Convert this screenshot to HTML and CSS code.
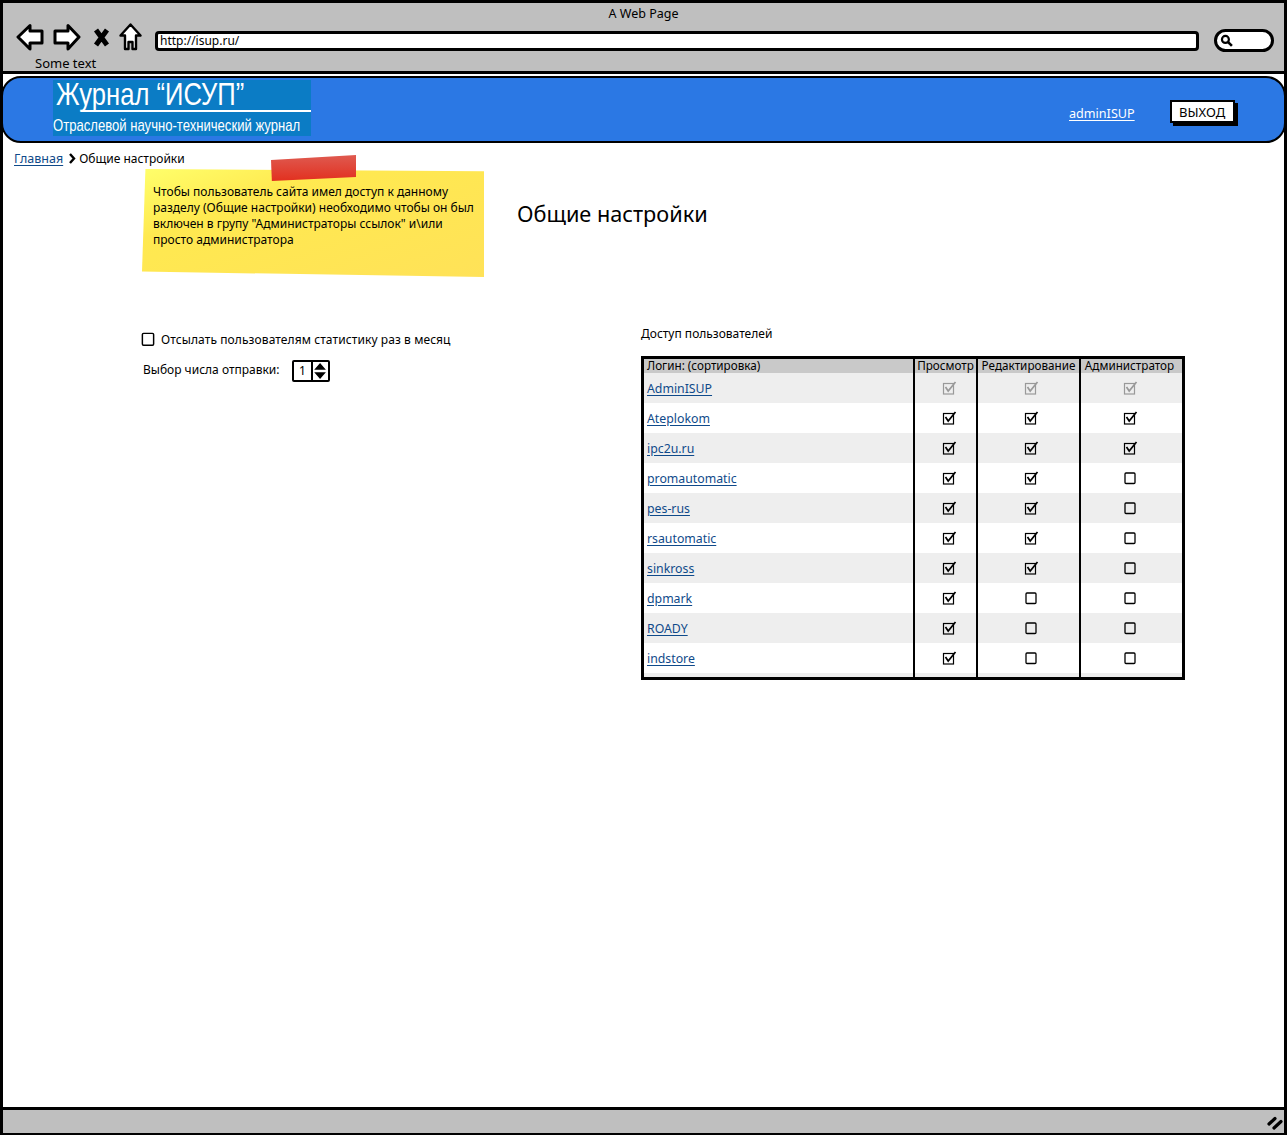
FILE: index.html
```html
<!DOCTYPE html>
<html lang="en">

<head>
    <meta charset="UTF-8">
    <meta name="viewport" content="width=device-width, initial-scale=1.0">
    <title>A Web Page</title>
    <link rel="stylesheet" href="styles.css">
</head>

<body>
    <svg class="defs" width="0" height="0">
        <symbol id="box-on" viewBox="0 0 16 16">
            <rect x="2.5" y="3.5" width="10" height="10.5" fill="none" stroke="currentColor" stroke-width="1.2" />
            <path d="M4.5 7 L7.2 11 L14.5 2" fill="none" stroke="currentColor" stroke-width="1.7" />
        </symbol>
        <symbol id="box-off" viewBox="0 0 16 16">
            <rect x="3" y="3" width="10" height="10.5" rx="1" fill="none" stroke="currentColor" stroke-width="1.3" />
        </symbol>
    </svg>

    <div class="window">
        <div class="chrome">
            <div class="chrome-title">A Web Page</div>
            <div class="chrome-row">
                <svg class="nav-icon back" viewBox="0 0 28 28">
                    <path d="M2 14 L14 2.5 V8 H26 V20 H14 V26 Z" fill="#fff" stroke="#000" stroke-width="3" stroke-linejoin="round" />
                </svg>
                <svg class="nav-icon forward" viewBox="0 0 28 28">
                    <path d="M26 14 L15 2.5 V8 H2 V20 H15 V26 Z" fill="#fff" stroke="#000" stroke-width="3" stroke-linejoin="round" />
                </svg>
                <svg class="nav-icon close" viewBox="0 0 17 19">
                    <path d="M3 2 L14 17 M14 2 L3 17" fill="none" stroke="#000" stroke-width="5" />
                </svg>
                <svg class="nav-icon home" viewBox="0 0 23 28">
                    <path d="M11.5 1.5 L21.5 12.5 H17 V26 H13.5 V19 H9.5 V26 H6 V12.5 H1.5 Z" fill="#fff" stroke="#000" stroke-width="2.4" stroke-linejoin="round" />
                </svg>
                <div class="address">http://isup.ru/</div>
                <div class="search">
                    <svg class="search-icon" viewBox="0 0 12 12">
                        <circle cx="5" cy="5" r="3.2" fill="none" stroke="#000" stroke-width="2" />
                        <path d="M7.5 7.5 L11 11" stroke="#000" stroke-width="2.4" />
                    </svg>
                </div>
            </div>
            <div class="chrome-note">Some text</div>
        </div>

        <div class="page">
            <header class="site-header">
                <div class="logo">
                    <div class="logo-title"><span>Журнал “ИСУП”</span></div>
                    <div class="logo-line"></div>
                    <div class="logo-sub"><span>Отраслевой научно-технический журнал</span></div>
                </div>
                <a class="user-link" href="#">adminISUP</a>
                <button class="exit-btn">ВЫХОД</button>
            </header>

            <div class="breadcrumbs">
                <a href="#">Главная</a>
                <svg class="crumb-arrow" viewBox="0 0 8 11">
                    <path d="M2 1 L6 5.5 L2 10" fill="none" stroke="#000" stroke-width="2.4" />
                </svg>
                <span>Общие настройки</span>
            </div>

            <div class="intro">
                <div class="note-wrap">
                    <div class="tape"></div>
                    <div class="note">Чтобы пользователь сайта имел доступ к данному разделу (Общие настройки) необходимо чтобы он был включен в групу "Администраторы ссылок" и\или просто администратора</div>
                </div>
                <h1 class="page-title">Общие настройки</h1>
            </div>

            <div class="columns">
                <div class="settings">
                    <label class="check-line">
                        <svg class="check big"><use href="#box-off" /></svg>
                        Отсылать пользователям статистику раз в месяц
                    </label>
                    <div class="day-line">
                        <span>Выбор числа отправки:</span>
                        <div class="stepper">
                            <span class="stepper-value">1</span>
                            <svg class="stepper-arrows" viewBox="0 0 15 20">
                                <path d="M7.5 1 L14 8.5 H1 Z M7.5 19 L14 11.5 H1 Z" fill="#000" />
                            </svg>
                        </div>
                    </div>
                </div>

                <div class="access">
                    <div class="access-title">Доступ пользователей</div>
                    <table class="access-table">
                        <thead>
                            <tr>
                                <th class="col-login">Логин: (сортировка)</th>
                                <th class="col-view">Просмотр</th>
                                <th class="col-edit">Редактирование</th>
                                <th class="col-admin">Администратор</th>
                            </tr>
                        </thead>
                        <tbody>
                            <tr class="locked">
                                <td><a href="#">AdminISUP</a></td>
                                <td><svg class="check"><use href="#box-on" /></svg></td>
                                <td><svg class="check"><use href="#box-on" /></svg></td>
                                <td><svg class="check"><use href="#box-on" /></svg></td>
                            </tr>
                            <tr>
                                <td><a href="#">Ateplokom</a></td>
                                <td><svg class="check"><use href="#box-on" /></svg></td>
                                <td><svg class="check"><use href="#box-on" /></svg></td>
                                <td><svg class="check"><use href="#box-on" /></svg></td>
                            </tr>
                            <tr>
                                <td><a href="#">ipc2u.ru</a></td>
                                <td><svg class="check"><use href="#box-on" /></svg></td>
                                <td><svg class="check"><use href="#box-on" /></svg></td>
                                <td><svg class="check"><use href="#box-on" /></svg></td>
                            </tr>
                            <tr>
                                <td><a href="#">promautomatic</a></td>
                                <td><svg class="check"><use href="#box-on" /></svg></td>
                                <td><svg class="check"><use href="#box-on" /></svg></td>
                                <td><svg class="check"><use href="#box-off" /></svg></td>
                            </tr>
                            <tr>
                                <td><a href="#">pes-rus</a></td>
                                <td><svg class="check"><use href="#box-on" /></svg></td>
                                <td><svg class="check"><use href="#box-on" /></svg></td>
                                <td><svg class="check"><use href="#box-off" /></svg></td>
                            </tr>
                            <tr>
                                <td><a href="#">rsautomatic</a></td>
                                <td><svg class="check"><use href="#box-on" /></svg></td>
                                <td><svg class="check"><use href="#box-on" /></svg></td>
                                <td><svg class="check"><use href="#box-off" /></svg></td>
                            </tr>
                            <tr>
                                <td><a href="#">sinkross</a></td>
                                <td><svg class="check"><use href="#box-on" /></svg></td>
                                <td><svg class="check"><use href="#box-on" /></svg></td>
                                <td><svg class="check"><use href="#box-off" /></svg></td>
                            </tr>
                            <tr>
                                <td><a href="#">dpmark</a></td>
                                <td><svg class="check"><use href="#box-on" /></svg></td>
                                <td><svg class="check"><use href="#box-off" /></svg></td>
                                <td><svg class="check"><use href="#box-off" /></svg></td>
                            </tr>
                            <tr>
                                <td><a href="#">ROADY</a></td>
                                <td><svg class="check"><use href="#box-on" /></svg></td>
                                <td><svg class="check"><use href="#box-off" /></svg></td>
                                <td><svg class="check"><use href="#box-off" /></svg></td>
                            </tr>
                            <tr>
                                <td><a href="#">indstore</a></td>
                                <td><svg class="check"><use href="#box-on" /></svg></td>
                                <td><svg class="check"><use href="#box-off" /></svg></td>
                                <td><svg class="check"><use href="#box-off" /></svg></td>
                            </tr>
                            <tr class="filler">
                                <td></td>
                                <td></td>
                                <td></td>
                                <td></td>
                            </tr>
                        </tbody>
                    </table>
                </div>
            </div>
        </div>

        <div class="statusbar">
            <svg class="grip" viewBox="0 0 16 14">
                <path d="M2 8 L8 2.5 M7 12 L14 5.5" fill="none" stroke="#000" stroke-width="3.2" stroke-linecap="round" />
            </svg>
        </div>
    </div>
</body>

</html>
```

FILE: styles.css
```css
body {
    font-family: "Noto Sans", "DejaVu Sans", sans-serif;
    font-size: 12px;
    margin: 0;
    padding: 0;
    background-color: #fff;
    color: #000;
}

a {
    color: #0f4a8a;
    text-underline-offset: 2px;
}

.defs {
    display: block;
    height: 0;
}

.window {
    box-sizing: border-box;
    height: 1135px;
    display: flex;
    flex-direction: column;
    border: 3px solid #000;
    border-bottom-width: 2px;
    overflow: hidden;
}

/* browser bar */
.chrome {
    height: 71px;
    flex-shrink: 0;
    box-sizing: border-box;
    background-color: #bfbfbf;
    border-bottom: 3px solid #000;
}

.chrome-title {
    text-align: center;
    line-height: 16px;
    font-size: 12.5px;
    padding-top: 3px;
    height: 16px;
    margin-bottom: 1px;
}

.chrome-row {
    display: flex;
    align-items: center;
    height: 30px;
    padding-left: 13px;
}

.nav-icon {
    flex-shrink: 0;
    display: block;
    margin-bottom: 2px;
}

.back {
    width: 28px;
    height: 28px;
    margin-right: 9px;
}

.forward {
    width: 28px;
    height: 28px;
    margin-right: 12px;
}

.close {
    width: 17px;
    height: 19px;
    margin-right: 9px;
}

.home {
    width: 23px;
    height: 28px;
    margin-right: 13px;
}

.address {
    flex-grow: 1;
    height: 20px;
    box-sizing: border-box;
    margin-top: 5px;
    padding-left: 2px;
    background-color: #fff;
    border: 3px solid #000;
    border-radius: 4px;
    line-height: 14px;
    font-size: 12px;
}

.search {
    width: 60px;
    height: 23px;
    box-sizing: border-box;
    margin: 4px 10px 0 15px;
    padding: 2px 0 0 3px;
    background-color: #fff;
    border: 3px solid #000;
    border-radius: 12px;
}

.search-icon {
    display: block;
    width: 13px;
    height: 13px;
}

.chrome-note {
    margin-top: 2px;
    padding-left: 32px;
    line-height: 16px;
    font-size: 13px;
}

/* page */
.page {
    flex-grow: 1;
    min-height: 0;
}

.site-header {
    height: 67px;
    box-sizing: border-box;
    margin: 2px -2px 0 -2px;
    display: flex;
    align-items: flex-start;
    background-color: #2b78e4;
    border: 2px solid #000;
    border-radius: 20px;
}

.logo {
    width: 258px;
    height: 56px;
    margin: 2px 0 0 50px;
    background-color: #0b7cc5;
    color: #fff;
    font-family: "Liberation Sans", sans-serif;
}

.logo-title {
    height: 32px;
    margin-top: -2px;
    line-height: 32px;
    font-size: 32px;
    padding-left: 3px;
    white-space: nowrap;
}

.logo-title span,
.logo-sub span {
    display: inline-block;
    transform-origin: left center;
}

.logo-title span {
    transform: scaleX(0.8);
}

.logo-line {
    height: 2px;
    margin-left: 28px;
    background-color: #fff;
}

.logo-sub {
    width: 258px;
    padding-top: 4px;
    line-height: 20px;
    font-size: 17px;
    white-space: nowrap;
}

.logo-sub span {
    transform: scaleX(0.77);
}

.user-link {
    margin: 28px 0 0 758px;
    color: #fff;
    font-size: 12.6px;
    line-height: 16px;
}

.exit-btn {
    width: 65px;
    height: 23px;
    margin: 22px 0 0 35px;
    padding: 0;
    background-color: #fff;
    border: 2px solid #000;
    box-shadow: 3px 3px 0 #000;
    font-family: inherit;
    font-size: 13px;
    color: #000;
}

.breadcrumbs {
    display: flex;
    align-items: center;
    height: 16px;
    margin: 7px 0 0 11px;
}

.breadcrumbs a {
    font-size: 12.5px;
}

.crumb-arrow {
    width: 8px;
    height: 11px;
    margin: 0 3px 0 5px;
}

.intro {
    display: flex;
    align-items: flex-start;
    margin-top: 3px;
    padding-left: 139px;
}

.note-wrap {
    position: relative;
    width: 342px;
    flex-shrink: 0;
}

.tape {
    position: absolute;
    z-index: 1;
    left: 129px;
    top: -14px;
    width: 85px;
    height: 26px;
    background: linear-gradient(#df5a50, #e2301f);
    clip-path: polygon(0 19%, 100% 0, 100% 85%, 1% 100%);
}

.note {
    box-sizing: border-box;
    height: 108px;
    padding: 15px 8px 0 11px;
    background: linear-gradient(160deg, #ffff6b, #ffe950 30%, #ffe258);
    clip-path: polygon(1% 0, 100% 2%, 100% 100%, 0 95%);
    font-size: 12px;
    line-height: 16px;
}

.page-title {
    margin: 31px 0 0 33px;
    font-size: 21.7px;
    font-weight: normal;
    line-height: 28px;
}

.columns {
    display: flex;
    align-items: flex-start;
    margin-top: 49px;
    padding-left: 139px;
}

.settings {
    width: 499px;
    flex-shrink: 0;
    padding-top: 5px;
}

.check-line {
    display: flex;
    align-items: center;
    height: 16px;
    gap: 4px;
    letter-spacing: 0.09px;
}

.check {
    display: block;
    width: 16px;
    height: 16px;
    margin: 0 auto;
    color: #000;
}

.check.big {
    width: 18px;
    height: 18px;
    margin: 0 0 0 -3px;
}

.day-line {
    display: flex;
    align-items: center;
    margin-top: 9px;
    padding-left: 1px;
}

.stepper {
    display: flex;
    align-items: center;
    width: 38px;
    height: 22px;
    box-sizing: border-box;
    margin: 4px 0 0 12px;
    border: 2px solid #000;
    border-radius: 2px;
}

.stepper-value {
    width: 19px;
    height: 18px;
    line-height: 17px;
    text-align: center;
    border-right: 2px solid #000;
}

.stepper-arrows {
    display: block;
    width: 15px;
    height: 18px;
}

.access-title {
    height: 15px;
    line-height: 15px;
    margin-bottom: 15px;
}

/* users table */
.access-table {
    width: 544px;
    table-layout: fixed;
    border-collapse: collapse;
    border: 3px solid #000;
}

.access-table th {
    height: 14px;
    padding: 0;
    vertical-align: top;
    background-color: #c9c9c9;
    font-size: 11.7px;
    font-weight: normal;
    line-height: 13px;
    white-space: nowrap;
}

.access-table td {
    height: 30px;
    padding: 0;
    text-align: center;
}

.access-table tbody tr:nth-child(odd) td {
    background-color: #eee;
}

.access-table th:first-child {
    text-align: left;
    padding-left: 3px;
}

.access-table td:first-child {
    text-align: left;
    padding-left: 3px;
}

.access-table th+th,
.access-table td+td {
    border-left: 2px solid #000;
}

.access-table td:nth-child(2) {
    padding-left: 6px;
}

.access-table td:nth-child(3) {
    padding-left: 4px;
}

.access-table th:nth-child(4),
.access-table td:nth-child(4) {
    padding-right: 4px;
}

.col-login {
    width: 266px;
}

.col-view {
    width: 61px;
}

.col-edit {
    width: 101px;
}

.access-table a {
    font-size: 12.3px;
}

.locked .check {
    color: #999;
}

.access-table .filler td {
    height: 4px;
}

.statusbar {
    height: 26px;
    flex-shrink: 0;
    display: flex;
    justify-content: flex-end;
    align-items: center;
    box-sizing: border-box;
    padding-right: 1px;
    background-color: #bfbfbf;
    border-top: 3px solid #000;
}

.grip {
    width: 16px;
    height: 14px;
    margin-top: 2px;
}
```
